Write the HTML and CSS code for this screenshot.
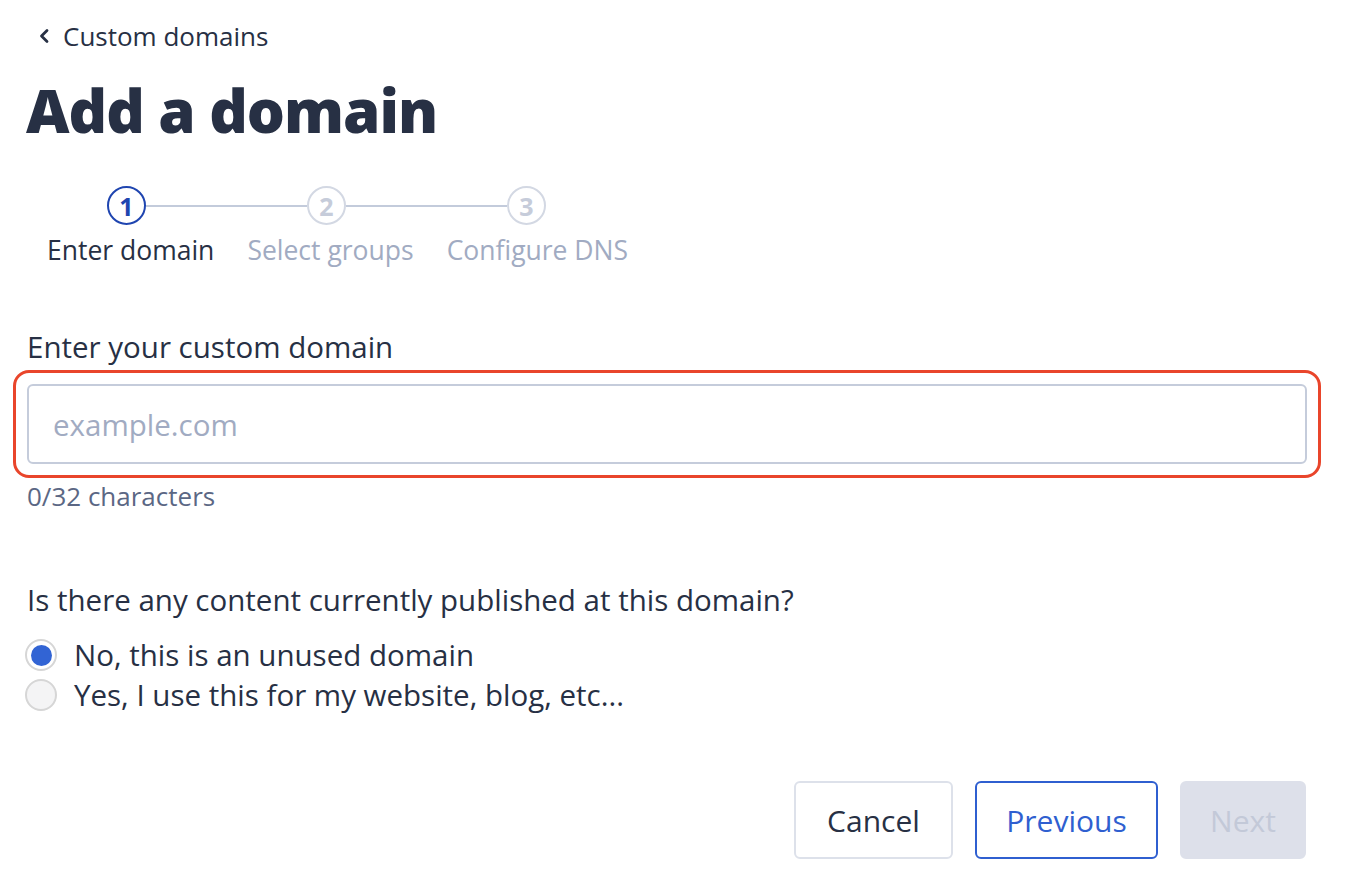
FILE: index.html
```html
<!DOCTYPE html>
<html lang="en">
<head>
<meta charset="utf-8">
<title>Add a domain</title>
<link rel="stylesheet" href="styles.css">
</head>
<body>
<main class="page">
  <a class="back" href="#">
    <svg class="back-icon" width="12" height="16" viewBox="0 0 12 16"><path d="M9 2.5 L3.5 8 L9 13.5" fill="none" stroke="#273044" stroke-width="2.8" stroke-linecap="round" stroke-linejoin="round"/></svg>
    <span>Custom domains</span>
  </a>
  <h1 class="title">Add a domain</h1>

  <div class="stepper">
    <div class="track">
      <span class="dot dot-active">1</span>
      <span class="line"></span>
      <span class="dot">2</span>
      <span class="line"></span>
      <span class="dot">3</span>
    </div>
    <div class="labels">
      <span class="label label-active">Enter domain</span>
      <span class="label">Select groups</span>
      <span class="label">Configure DNS</span>
    </div>
  </div>

  <label class="field-label" for="domain">Enter your custom domain</label>
  <div class="focus-ring">
    <input id="domain" class="input" type="text" placeholder="example.com">
  </div>
  <div class="counter">0/32 characters</div>

  <p class="question">Is there any content currently published at this domain?</p>
  <div class="radios">
    <label class="radio-row"><span class="radio radio-checked"><span class="radio-dot"></span></span><span>No, this is an unused domain</span></label>
    <label class="radio-row"><span class="radio"></span><span>Yes, I use this for my website, blog, etc...</span></label>
  </div>

  <div class="actions">
    <button class="btn btn-cancel">Cancel</button>
    <button class="btn btn-prev">Previous</button>
    <button class="btn btn-next" disabled>Next</button>
  </div>
</main>
</body>
</html>
```

FILE: styles.css
```css
* { box-sizing: border-box; }
html, body { margin: 0; padding: 0; background: #fff; }
body {
  font-family: "Open Sans", "Lato", sans-serif;
  color: #273044;
}
.page {
  width: 1354px;
  padding: 20px 48px 0 27px;
}
.back {
  display: flex;
  align-items: center;
  gap: 13px;
  margin-left: 11px;
  color: #273044;
  text-decoration: none;
  font-size: 26px;
  line-height: 32px;
  height: 32px;
}
.back-icon { display: block; }
.title {
  margin: 26px 0 0 -1px;
  font-size: 60px;
  font-weight: 800;
  line-height: 64px;
  letter-spacing: -1px;
  color: #273044;
}
.stepper {
  margin-top: 44px;
}
.track {
  display: flex;
  align-items: center;
  margin-left: 80px;
}
.dot {
  width: 39px;
  height: 39px;
  border-radius: 50%;
  border: 2.5px solid #d3d8e3;
  color: #c6ccda;
  display: flex;
  align-items: center;
  justify-content: center;
  font-size: 25px;
  font-weight: 700;
  flex: none;
}
.dot-active {
  border-color: #1f45b0;
  color: #1f45b0;
}
.line {
  width: 161px;
  height: 2px;
  background: #c3cbdb;
  flex: none;
}
.labels {
  display: flex;
  gap: 33px;
  margin-top: 9px;
  margin-left: 20px;
  font-size: 26.5px;
  line-height: 32px;
}
.label { color: #a1abc2; }
.label-active { color: #273044; }
.field-label {
  display: block;
  margin-top: 63px;
  font-size: 29.5px;
  line-height: 36px;
  color: #273044;
}
.focus-ring {
  margin: 5px 0 0 -14px;
  width: 1308px;
  padding: 11px;
  border: 3px solid #e9452b;
  border-radius: 16px;
}
.input {
  display: block;
  width: 100%;
  height: 80px;
  border: 2px solid #c5ccdb;
  border-radius: 6px;
  padding: 0 24px;
  font-family: inherit;
  font-size: 29.5px;
  color: #273044;
  outline: none;
}
.input::placeholder { color: #a1abc2; }
.counter {
  margin-top: 2px;
  font-size: 26px;
  line-height: 32px;
  color: #5b6784;
}
.question {
  margin: 70px 0 0;
  font-size: 29.5px;
  line-height: 36px;
}
.radios {
  margin-top: 19px;
  display: flex;
  flex-direction: column;
  gap: 4px;
}
.radio-row {
  display: flex;
  align-items: center;
  gap: 17px;
  margin-left: -2px;
  font-size: 29.5px;
  line-height: 36px;
}
.radio {
  width: 32px;
  height: 32px;
  border-radius: 50%;
  border: 2px solid #d6d6d6;
  background: #f4f4f5;
  display: flex;
  align-items: center;
  justify-content: center;
  flex: none;
}
.radio-checked { background: #fff; }
.radio-dot {
  width: 21px;
  height: 21px;
  border-radius: 50%;
  background: #3264d4;
}
.actions {
  margin-top: 68px;
  display: flex;
  justify-content: flex-end;
  gap: 22px;
}
.btn {
  height: 78px;
  border-radius: 6px;
  font-family: inherit;
  font-size: 30px;
  background: #fff;
  padding: 0 10px;
}
.btn-cancel {
  width: 159px;
  border: 2px solid #dde1ea;
  color: #273044;
}
.btn-prev {
  width: 183px;
  border: 2px solid #2f5fd0;
  color: #2f5fd0;
}
.btn-next {
  width: 126px;
  border: 2px solid #dde0ea;
  background: #dde0ea;
  color: #c3c9d8;
}
```
